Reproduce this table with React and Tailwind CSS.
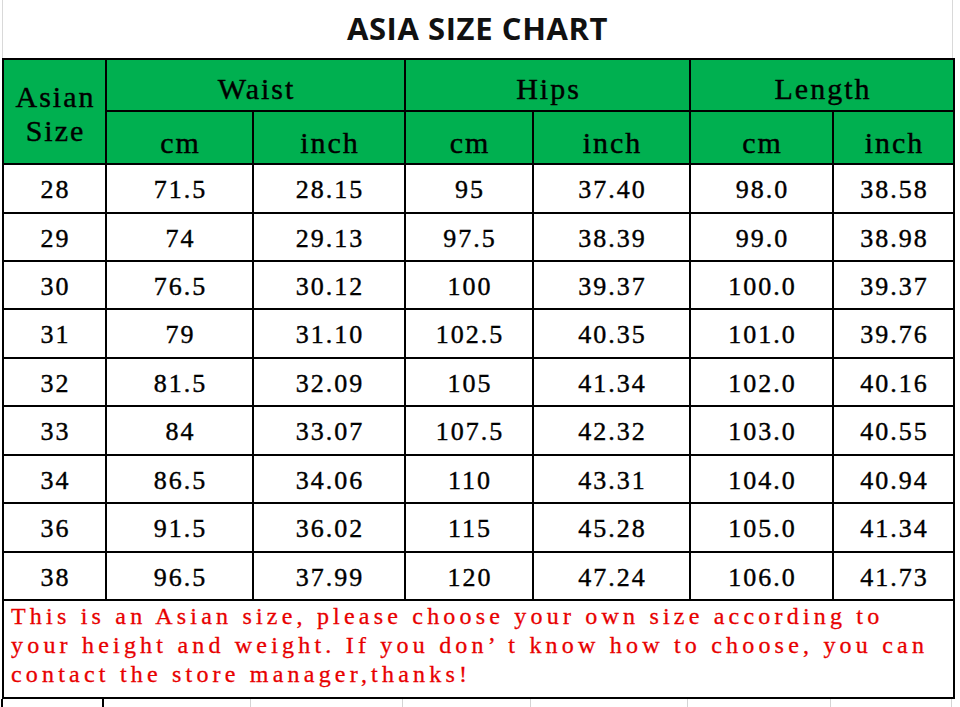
import React from 'react';

const cols = ['w-[103px]', 'w-[147px]', 'w-[152px]', 'w-[128px]', 'w-[157px]', 'w-[143px]', 'w-[121px]'];

const rows = [
  { h: 'h-[49px]', v: ['28', '71.5', '28.15', '95', '37.40', '98.0', '38.58'] },
  { h: 'h-[48px]', v: ['29', '74', '29.13', '97.5', '38.39', '99.0', '38.98'] },
  { h: 'h-[48px]', v: ['30', '76.5', '30.12', '100', '39.37', '100.0', '39.37'] },
  { h: 'h-[49px]', v: ['31', '79', '31.10', '102.5', '40.35', '101.0', '39.76'] },
  { h: 'h-[48px]', v: ['32', '81.5', '32.09', '105', '41.34', '102.0', '40.16'] },
  { h: 'h-[49px]', v: ['33', '84', '33.07', '107.5', '42.32', '103.0', '40.55'] },
  { h: 'h-[48px]', v: ['34', '86.5', '34.06', '110', '43.31', '104.0', '40.94'] },
  { h: 'h-[49px]', v: ['36', '91.5', '36.02', '115', '45.28', '105.0', '41.34'] },
  { h: 'h-[48px]', v: ['38', '96.5', '37.99', '120', '47.24', '106.0', '41.73'] },
];

const serif = "font-['Liberation_Serif',serif]";
const head = `border-2 border-black bg-[#00b050] text-black text-[30px] leading-[30px] tracking-[2px] pl-[2px] [-webkit-text-stroke:0.4px] ${serif} font-normal align-middle text-center`;

export default function App() {
  return (
    <div className="w-[960px] h-[707px] bg-white overflow-hidden">
      <div className="ml-[2px] w-[951px] h-[58px] border-l border-r border-[#d9d9d9] flex items-center justify-center pb-[2px]">
        <h1 className="font-['Open_Sans',sans-serif] font-bold text-[31px] tracking-[0.6px] text-[#111]">ASIA SIZE CHART</h1>
      </div>
      <table className="ml-[2px] w-[951px] table-fixed border-collapse">
        <colgroup>
          {cols.map((c, i) => (
            <col key={i} className={c} />
          ))}
        </colgroup>
        <thead>
          <tr className="h-[52px]">
            <th rowSpan={2} className={`${head} !leading-[34px] pt-[4px]`}>
              Asian<br />Size
            </th>
            <th colSpan={2} className={`${head} pt-[8px]`}>Waist</th>
            <th colSpan={2} className={`${head} pt-[8px]`}>Hips</th>
            <th colSpan={2} className={`${head} pt-[8px]`}>Length</th>
          </tr>
          <tr className="h-[53px]">
            {['cm', 'inch', 'cm', 'inch', 'cm', 'inch'].map((t, i) => (
              <th key={i} className={`${head} pt-[10px]`}>{t}</th>
            ))}
          </tr>
        </thead>
        <tbody>
          {rows.map((r) => (
            <tr key={r.v[0]} className={r.h}>
              {r.v.map((t, i) => (
                <td key={i} className={`border-2 border-black text-center align-middle pt-[3px] pl-[2px] text-[26px] leading-[30px] tracking-[2px] [-webkit-text-stroke:0.4px] text-black ${serif}`}>
                  {t}
                </td>
              ))}
            </tr>
          ))}
          <tr className="h-[98px]">
            <td colSpan={7} className={`border-2 border-black align-top text-left pl-[7px] pt-[1px] text-[24px] leading-[29px] tracking-[4.2px] whitespace-nowrap [-webkit-text-stroke:0.3px] text-[#e80000] ${serif}`}>
              This is an Asian size, please choose your own size according to<br />
              your height and weight. If you don’ t know how to choose, you can<br />
              contact the store manager,thanks!
            </td>
          </tr>
        </tbody>
      </table>
      <div className="ml-[1px] flex h-[12px]">
        <div className="w-[103px] border-l-2 border-r-2 border-black" />
        <div className="w-[147px] border-r border-[#d4d4d4]" />
        <div className="w-[152px] border-r border-[#d4d4d4]" />
        <div className="w-[128px] border-r border-[#d4d4d4]" />
        <div className="w-[157px] border-r border-[#d4d4d4]" />
        <div className="w-[143px] border-r border-[#d4d4d4]" />
        <div className="w-[121px] border-r border-[#d4d4d4]" />
      </div>
    </div>
  );
}
